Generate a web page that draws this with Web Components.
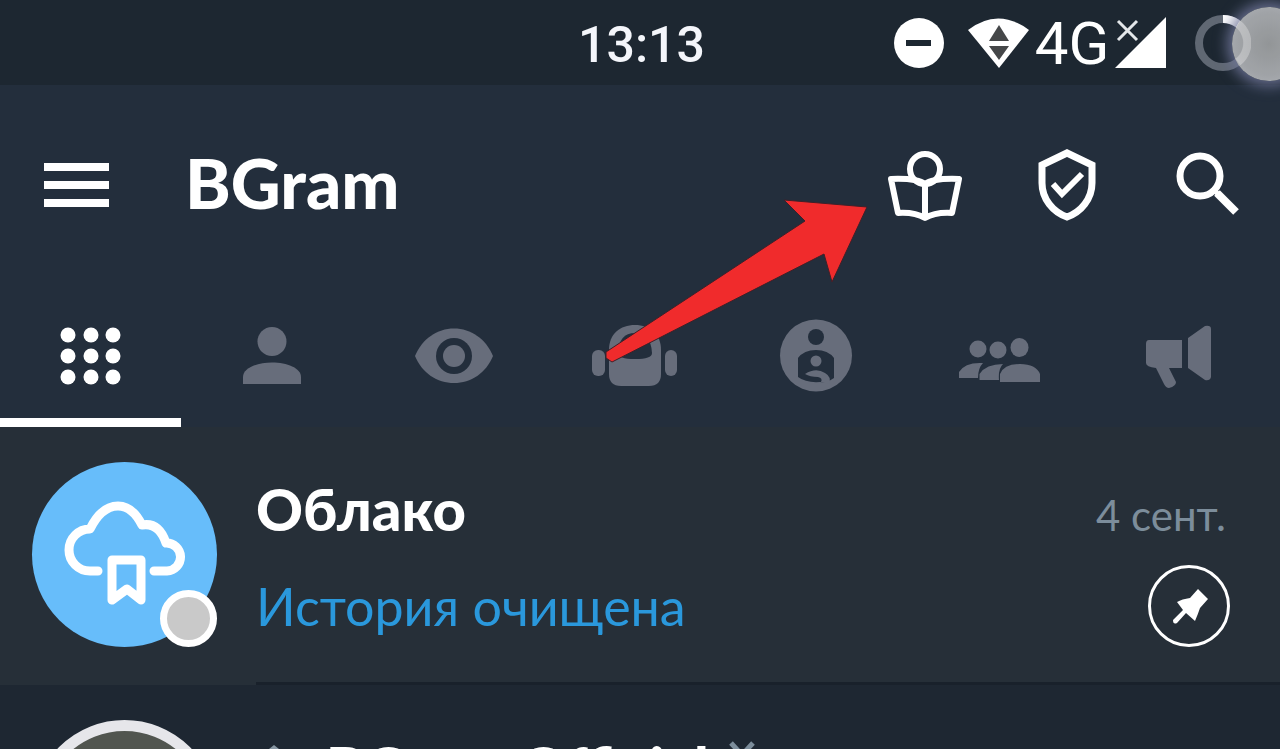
<!DOCTYPE html>
<html lang="ru">
<head>
<meta charset="utf-8">
<meta name="viewport" content="width=device-width">
<title>BGram</title>
<style>
body { margin: 0; background: #1e2732; font-family: Lato, "Open Sans", sans-serif; color: #fff; }
</style>
</head>
<body>
<bgram-app></bgram-app>
<script>
const define = (name, html, setup) => customElements.define(name, class extends HTMLElement {
  connectedCallback() {
    if (this.shadowRoot) return;
    this.attachShadow({ mode: 'open' }).innerHTML = html;
    if (setup) setup(this, this.shadowRoot);
  }
});

define('status-bar', `
<style>
  :host { display: grid; grid-template-columns: 1fr auto 1fr; align-items: center; height: 85px; background: #1d2731; font-family: Roboto, sans-serif; }
  time { grid-column: 2; font-size: 50px; font-weight: 500; line-height: 60px; color: #f4f6fb; padding: 4px 0 0 3px; }
  .icons { display: flex; align-items: center; justify-content: flex-end; padding-right: 29px; }
  svg { display: block; flex: none; }
  .net { min-width: 86px; text-align: center; font-size: 60px; line-height: 84px; padding-top: 2px; }
</style>
<time>13:13</time>
<div class="icons">
  <svg width="51" height="51" viewBox="0 0 51 51"><circle cx="26" cy="25" r="25" fill="#fff"/><path d="M13 25h25" stroke="#1d2731" stroke-width="6"/></svg>
  <svg width="85" height="51" viewBox="0 0 85 51"><path d="M24 12Q54-11 85 12L55 50Z" fill="#fff"/><path d="M55 7l10 16H45ZM45 28h20L55 42Z" fill="#454749"/></svg>
  <span class="net">4G</span>
  <svg width="51" height="52" viewBox="0 0 51 52"><path d="M51 0v51H0Z" fill="#fff"/><path d="M3 4l19 19M22 4L3 23" stroke="#e4e7ea" stroke-width="3"/></svg>
  <svg width="85" height="58" viewBox="0 0 85 58" fill="none" stroke-width="8"><circle cx="57" cy="29" r="24" stroke="#606873"/><path d="M57 5a24 24 0 0 1 15 43" stroke="#fff"/></svg>
</div>`);

define('touch-dot', `
<style>
  :host { position: absolute; top: 7px; right: -26px; width: 74px; height: 74px; border-radius: 50%;
    background: radial-gradient(#a3a5a6, #b3b5b8 60%, #c6c8cd); opacity: .88; box-shadow: 0 0 14px 5px #70769a; pointer-events: none; }
</style>`);

define('icon-button', `
<style>
  :host { display: block; }
  button { display: flex; align-items: center; justify-content: center; width: 100%; height: 100%; padding: 0; border: 0; background: none; color: inherit; }
</style>
<button type="button"><slot></slot></button>`, (el, root) => root.querySelector('button').setAttribute('aria-label', el.getAttribute('label')));

define('app-header', `
<style>
  :host { display: flex; align-items: center; height: 200px; background: #232e3c; }
  icon-button { width: 142px; height: 142px; color: #fff; }
  .menu { width: 153px; }
  h1 { flex: 1; margin: 0; padding: 0 0 4px 32px; font-size: 69px; line-height: 80px; font-weight: 900; }
  svg { display: block; }
</style>
<icon-button class="menu" label="Меню"><svg width="65" height="46" viewBox="0 0 65 46"><path d="M0 5h65M0 23h65M0 41h65" stroke="#fff" stroke-width="8"/></svg></icon-button>
<h1>BGram</h1>
<icon-button label="Чтение"><svg width="80" height="80" viewBox="0 0 80 80" fill="none" stroke="#fff" stroke-width="6" stroke-linejoin="round"><circle cx="40" cy="24" r="15"/><path d="M40 39Q32 33 6 34L13 68Q30 67 40 73Q50 67 67 68L74 34Q48 33 40 39V73"/></svg></icon-button>
<icon-button label="Защита"><svg width="80" height="80" viewBox="0 0 80 80" fill="none" stroke="#fff"><path d="M40 8L65 20V38C65 54 54 67 40 72C26 67 15 54 15 38V20Z" stroke-width="7"/><path d="M26 39l9 10 20-20" stroke-width="6"/></svg></icon-button>
<icon-button label="Поиск"><svg width="80" height="80" viewBox="0 0 80 80" fill="none" stroke="#fff"><circle cx="31" cy="31" r="20" stroke-width="7"/><path d="M48 48l19 19" stroke-width="8"/><path d="M43 43l7 7" stroke-width="5"/></svg></icon-button>`);

define('folder-tabs', `
<style>
  :host { display: grid; grid-template-columns: repeat(7, 1fr); height: 142px; padding-right: 10px; background: #232e3c; color: #676d7b; }
  icon-button { border-bottom: 9px solid transparent; padding-top: 9px; box-sizing: border-box; }
  .active { color: #fff; border-color: #fff; }
  svg { display: block; fill: currentColor; }
  .cut { fill: #232e3c; }
</style>
<icon-button class="active" label="Все"><svg width="96" height="96" viewBox="0 0 96 96"><circle cx="25" cy="27" r="7.500"/><circle cx="48" cy="27" r="7.500"/><circle cx="70" cy="27" r="7.500"/><circle cx="25" cy="48" r="7.500"/><circle cx="48" cy="48" r="7.500"/><circle cx="70" cy="48" r="7.500"/><circle cx="25" cy="69" r="7.500"/><circle cx="48" cy="69" r="7.500"/><circle cx="70" cy="69" r="7.500"/></svg></icon-button>
<icon-button label="Личные"><svg width="96" height="96" viewBox="0 0 96 96"><circle cx="48" cy="33.5" r="14.5"/><path d="M19 76V69C19 60 33 54.500 48 54.500S77 60 77 69V76Z"/></svg></icon-button>
<icon-button label="Непрочитанные"><svg width="96" height="96" viewBox="0 0 96 96"><path d="M9 48C16 31 31 20.500 48 20.500S80 31 87 48C80 65 65 75 48 75S16 65 9 48Z"/><circle class="cut" cx="48" cy="48" r="18"/><circle cx="48" cy="48" r="11"/></svg></icon-button>
<icon-button label="Боты"><svg width="96" height="96" viewBox="0 0 96 96"><rect x="5" y="42" width="13" height="26" rx="6"/><rect x="78" y="42" width="12" height="26" rx="6"/><path d="M22 42C22 26 33 17 48 17S74 26 74 42V66Q74 78 62 78H34Q22 78 22 66Z"/><path class="cut" d="M31 45Q32 25 48 25T65 45Q65 51 48 51T31 45Z"/></svg></icon-button>
<icon-button label="Админ"><svg width="96" height="96" viewBox="0 0 96 96"><circle cx="48" cy="47.500" r="36"/><circle class="cut" cx="48" cy="29" r="8"/><path class="cut" d="M30 50Q36 42 48 42T66 50V70L61 73Q58 75 52 74Q38 75 30 69Z"/><circle cx="48" cy="53" r="5.500"/><path d="M37 66Q48 59 57 65Q64 69 61 76L53 74Q55 70 50 69Q42 69 37 66Z"/></svg></icon-button>
<icon-button label="Группы"><svg width="96" height="96" viewBox="0 0 96 96"><circle cx="28" cy="41" r="8.500"/><circle cx="48" cy="42" r="8.500"/><ellipse cx="69.500" cy="39.500" rx="9" ry="9.500"/><path d="M9 70V64Q15 54 33 55Q28 60 28 70ZM29.500 72V66Q36 56 53 56Q48 61 49 72ZM50 74V66Q54 56 70 56T90 66V74Z"/></svg></icon-button>
<icon-button label="Каналы"><svg width="96" height="96" viewBox="0 0 96 96"><path d="M18 32H51V60H38L45 74Q45 78 38 80Q35 80 33 76L25 60Q15 59 15 55V36Q15 32 18 32ZM57 30L74 18Q80 17 80 21V69Q79 73 74 72L57 60Z"/></svg></icon-button>`);

define('saved-avatar', `
<style>
  :host { display: block; position: relative; width: 185px; height: 185px; border-radius: 50%; background: #67bdfa; }
  svg { display: block; }
  i { position: absolute; right: 0; bottom: 0; box-sizing: border-box; width: 57px; height: 57px; border: 7px solid #fff; border-radius: 50%; background: #c9c9c9; }
</style>
<svg width="185" height="185" viewBox="0 0 185 185" fill="none" stroke="#fff" stroke-width="9" stroke-linecap="round" stroke-linejoin="round"><path d="M66 109H58A19.500 19.500 0 0 1 58 67C66 51 75 44 86 44S104 51 110 63Q127 60 134 81A14 14 0 0 1 135 109H122M80 98h29v40l-14-11-15 11Z"/></svg><i></i>`);

define('channel-avatar', `
<style>:host { display: block; box-sizing: border-box; width: 185px; height: 185px; border: 11px solid #e6e6ea; border-radius: 50%; background: #51554f; }</style>`);

define('chat-row', `
<style>
  :host { display: flex; gap: 39px; box-sizing: border-box; height: 258px; padding-left: 32px; background: #1e2732; }
  :host([pinned]) { background: #262f38; }
  .avatar { flex: none; padding-top: 35px; }
  .body { flex: 1; min-width: 0; box-sizing: border-box; display: flex; flex-direction: column; gap: 25px; padding: 46px 50px 0 0; border-bottom: 3px solid #19212b; }
  .line { display: flex; justify-content: space-between; align-items: baseline; height: 72px; }
  .line + .line { align-items: center; }
  h2 { margin: 0; font-size: 58px; line-height: 72px; font-weight: 900; white-space: nowrap; display: flex; align-items: center; gap: 20px; }
  .date { font-size: 42px; line-height: 56px; color: #7c8d9b; padding-right: 4px; }
  .message { font-size: 52px; line-height: 72px; color: #2a98dc; white-space: nowrap; }
</style>
<div class="avatar"><slot name="avatar"></slot></div>
<div class="body">
  <div class="line"><h2><slot name="name"></slot></h2><span class="date"><slot name="date"></slot></span></div>
  <div class="line"><span class="message"><slot></slot></span><slot name="mark"></slot></div>
</div>`);

define('pin-mark', `
<style>:host { display: block; } svg { display: block; }</style>
<svg width="82" height="82" viewBox="0 0 82 82"><circle cx="41" cy="41" r="39.500" fill="none" stroke="#fff" stroke-width="3"/><path d="M50 24L60 34L52 43Q50 49 47 56L38 48L29 58Q25 60 25 55L35 45L29 37Q34 34 42 33Z" fill="#fff"/></svg>`);

define('pointer-arrow', `
<style>:host { position: absolute; left: 600px; top: 195px; pointer-events: none; } svg { display: block; }</style>
<svg width="275" height="175" viewBox="0 0 275 175"><path d="M184 5L267 12L232 87L224 59L12 167L6 163V157L205 26Z" fill="#f02b2c" stroke="#402029" stroke-width="1"/></svg>`);

define('bgram-app', `
<style>
  :host { display: block; position: relative; height: 100vh; overflow: hidden; }
  .small { display: block; flex: none; }
</style>
<status-bar></status-bar>
<app-header></app-header>
<folder-tabs></folder-tabs>
<main>
  <chat-row pinned>
    <saved-avatar slot="avatar"></saved-avatar>
    <span slot="name">Облако</span><span slot="date">4 сент.</span>
    История очищена
    <pin-mark slot="mark"></pin-mark>
  </chat-row>
  <chat-row>
    <channel-avatar slot="avatar"></channel-avatar>
    <svg slot="name" class="small" width="50" height="48" viewBox="0 0 50 48"><path d="M8 10L18 2L28 10V42H8Z" fill="#8796a2"/></svg>
    <span slot="name">BGram Official</span>
    <svg slot="name" class="small" width="30" height="56" viewBox="0 0 30 56"><path d="M2 4L24 28M24 4L2 28" stroke="#7c8d9b" stroke-width="5"/></svg>
  </chat-row>
</main>
<touch-dot></touch-dot>
<pointer-arrow></pointer-arrow>`);
</script>
</body>
</html>
